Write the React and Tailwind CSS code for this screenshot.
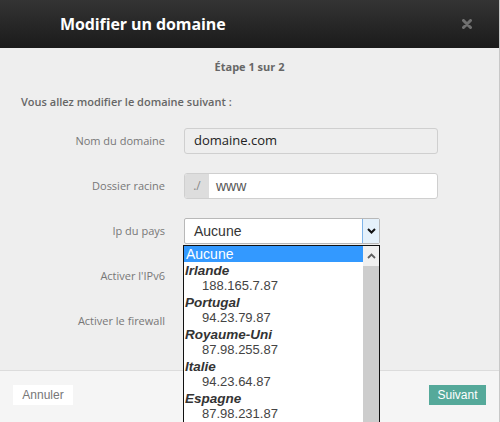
import React from 'react';

const groups = [
  { name: 'Irlande', ip: '188.165.7.87' },
  { name: 'Portugal', ip: '94.23.79.87' },
  { name: 'Royaume-Uni', ip: '87.98.255.87' },
  { name: 'Italie', ip: '94.23.64.87' },
  { name: 'Espagne', ip: '87.98.231.87' },
];

const FormRow = ({ label, children }) => (
  <div className="flex items-center h-[26px]">
    <div className="w-[165px] text-right text-[11px] text-[#777]">{label}</div>
    <div className="ml-[19px] flex-1 flex">{children}</div>
  </div>
);

export default function App() {
  return (
    <div className="w-[500px] h-[422px] overflow-hidden flex flex-col border-r border-[#c8c8c8] bg-[#eeeeee]" style={{ fontFamily: '"Open Sans", sans-serif' }}>
      {/* Header */}
      <div className="h-12 shrink-0 flex items-center justify-between pl-[60px] pr-[29px] bg-gradient-to-b from-[#343434] to-[#1b1b1b]">
        <h1 className="text-white text-[16px] font-bold tracking-[-0.1px]">Modifier un domaine</h1>
        <svg width="10" height="10" viewBox="0 0 10 10" className="mr-[-2px]">
          <path d="M1.5 1.5 L8.5 8.5 M8.5 1.5 L1.5 8.5" stroke="#707070" strokeWidth="3" strokeLinecap="round" />
        </svg>
      </div>

      {/* Body */}
      <div className="flex-1 relative">
        <div className="pt-[9px] text-center text-[11px] font-bold text-[#666] leading-5">Étape 1 sur 2</div>
        <div className="mt-[15px] pl-[21px] text-[11px] font-semibold text-[#666] leading-5">Vous allez modifier le domaine suivant :</div>

        <div className="mt-[16px] flex flex-col gap-[19px]">
          <FormRow label="Nom du domaine">
            <div className="w-[254px] h-[26px] rounded-[3px] border border-[#cfcfcf] bg-[#eeeeee] flex items-center pl-[9px] text-[13px] text-[#222]">
              domaine.com
            </div>
          </FormRow>
          <FormRow label="Dossier racine">
            <div className="w-[254px] h-[26px] rounded-[3px] border border-[#cfcfcf] bg-white flex overflow-hidden">
              <div className="w-[24px] bg-[#dddddd] flex items-center justify-center text-[12px] text-[#888]">./</div>
              <div className="flex-1 flex items-center pl-[7px] text-[14px] text-[#555]" style={{ fontFamily: '"Liberation Sans", Arial, sans-serif' }}>www</div>
            </div>
          </FormRow>
          <FormRow label="Ip du pays">
            <div className="relative w-[196px] h-[26px] border border-[#b8b8b8] rounded-[2px] bg-white flex items-center" style={{ fontFamily: '"Liberation Sans", Arial, sans-serif' }}>
              <span className="pl-[9px] text-[14px] text-[#333]">Aucune</span>
              <div className="absolute right-0 top-0 w-[17px] h-full bg-[#e5f1fb] border-l border-[#7eb4ea] flex items-center justify-center">
                <svg width="9" height="6" viewBox="0 0 9 6">
                  <path d="M1 1 L4.5 4.5 L8 1" stroke="#111" strokeWidth="2" fill="none" />
                </svg>
              </div>
            </div>
          </FormRow>
          <FormRow label="Activer l'IPv6" />
          <FormRow label="Activer le firewall" />
        </div>

        {/* Open select list */}
        <div className="absolute left-[183px] top-[197px] w-[197px] h-[180px] bg-white border border-[#111] border-b-0 flex text-[13px] text-[#444]" style={{ fontFamily: '"Liberation Sans", Arial, sans-serif' }}>
          <div className="flex-1 flex flex-col">
            <div className="h-[16px] leading-[16px] bg-[#3399ff] text-white text-[14px] pl-[2px]">Aucune</div>
            {groups.map((g) => (
              <React.Fragment key={g.name}>
                <div className="h-[16px] leading-[18px] pl-[1px] text-[13.5px] font-bold italic text-[#333]">{g.name}</div>
                <div className="h-[16px] leading-[16px] pl-[18px]">{g.ip}</div>
              </React.Fragment>
            ))}
          </div>
          <div className="w-[16px] flex flex-col bg-[#cdcdcd]">
            <div className="h-[20px] bg-[#f0f0f0] flex items-center justify-center">
              <svg width="9" height="6" viewBox="0 0 9 6">
                <path d="M1 5 L4.5 1.5 L8 5" stroke="#606060" strokeWidth="1.8" fill="none" />
              </svg>
            </div>
          </div>
        </div>
      </div>

      {/* Footer */}
      <div className="h-[52px] shrink-0 border-t border-[#dcdcdc] bg-[#f5f5f5] flex items-start justify-between pt-[14px] pl-[13px] pr-[13px]" style={{ fontFamily: '"Liberation Sans", Arial, sans-serif' }}>
        <button className="h-[20px] w-[60px] bg-white text-[12px] text-[#777]">Annuler</button>
        <button className="h-[20px] w-[57px] bg-[#55a99a] text-[12px] text-white">Suivant</button>
      </div>
    </div>
  );
}
